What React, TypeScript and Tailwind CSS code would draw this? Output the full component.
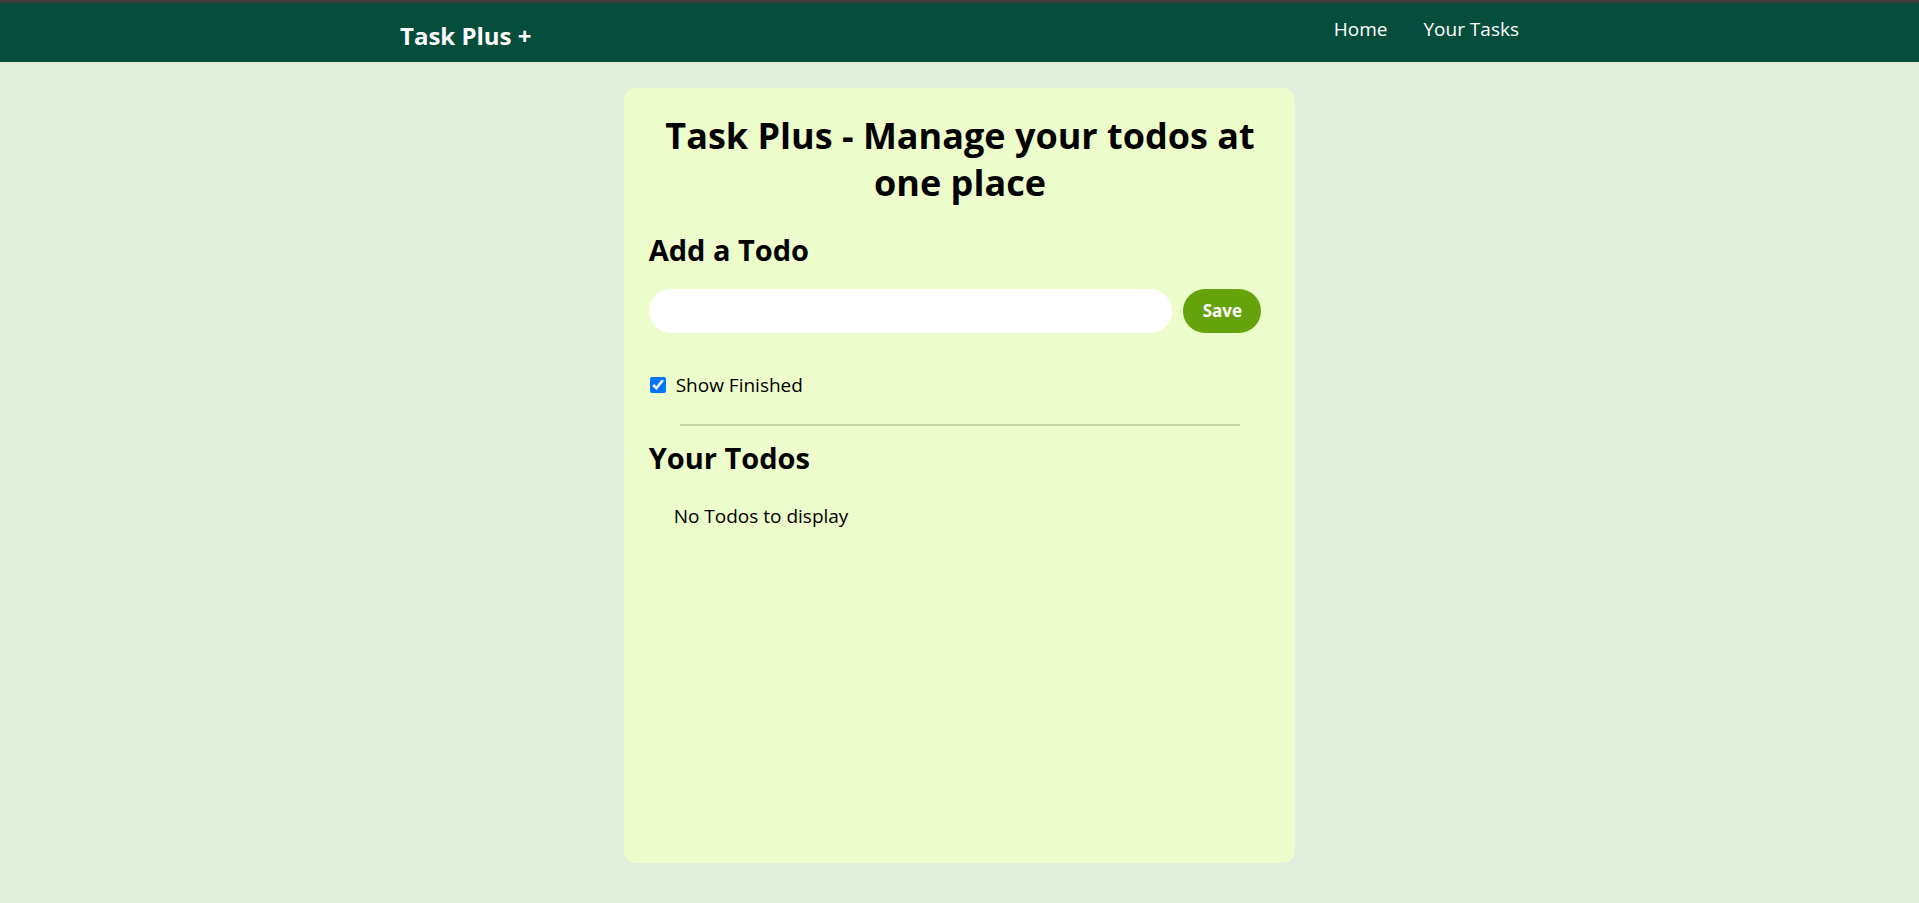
import { useState } from 'react'

export default function App() {
  const [todo, setTodo] = useState('')
  const [showFinished, setShowFinished] = useState(true)

  return (
    <div className="min-h-screen bg-[#e2eedc] font-['Open_Sans',sans-serif] text-black">
      <div className="h-[3px] bg-[#3b3b3b]"></div>
      <nav className="h-[59px] bg-[#064e3b] text-white">
        <div className="max-w-[1119px] mx-auto h-full flex justify-between">
          <div className="text-[24px] font-bold leading-[30px] mt-[18px]">Task Plus +</div>
          <ul className="flex gap-9 text-[19px] leading-6 mt-[14px]">
            <li className="cursor-pointer">Home</li>
            <li className="cursor-pointer">Your Tasks</li>
          </ul>
        </div>
      </nav>

      <main className="flex justify-center pt-[26px] pb-10">
        <div className="w-[35%] min-h-[775px] bg-[#ecfccb] rounded-xl p-6 pl-[25px]">
          <h1 className="text-[36px] font-bold text-center leading-[47px]">
            Task Plus - Manage your todos at one place
          </h1>

          <h2 className="text-[29px] font-bold leading-[36px] mt-[26px]">Add a Todo</h2>
          <div className="flex gap-[11px] mt-[21px] mr-[10px]">
            <input
              type="text"
              value={todo}
              onChange={(e) => setTodo(e.target.value)}
              className="flex-1 h-[44px] rounded-full bg-white px-5 outline-none"
            />
            <button className="w-[78px] h-[44px] rounded-full bg-[#65a30d] text-white font-bold text-[17px]">
              Save
            </button>
          </div>

          <label className="flex items-center gap-[10px] mt-[40px] h-6 text-[19px]">
            <input
              type="checkbox"
              checked={showFinished}
              onChange={() => setShowFinished(!showFinished)}
              className="w-4 h-4 ml-[1px]"
            />
            Show Finished
          </label>

          <div className="h-[2px] w-[90%] mx-auto bg-[#c6d4a6] mt-[27px]"></div>

          <h2 className="text-[29px] font-bold leading-[36px] mt-[14px]">Your Todos</h2>
          <div className="mt-[28px] ml-[25px] text-[19px] leading-6">No Todos to display</div>
        </div>
      </main>
    </div>
  )
}
